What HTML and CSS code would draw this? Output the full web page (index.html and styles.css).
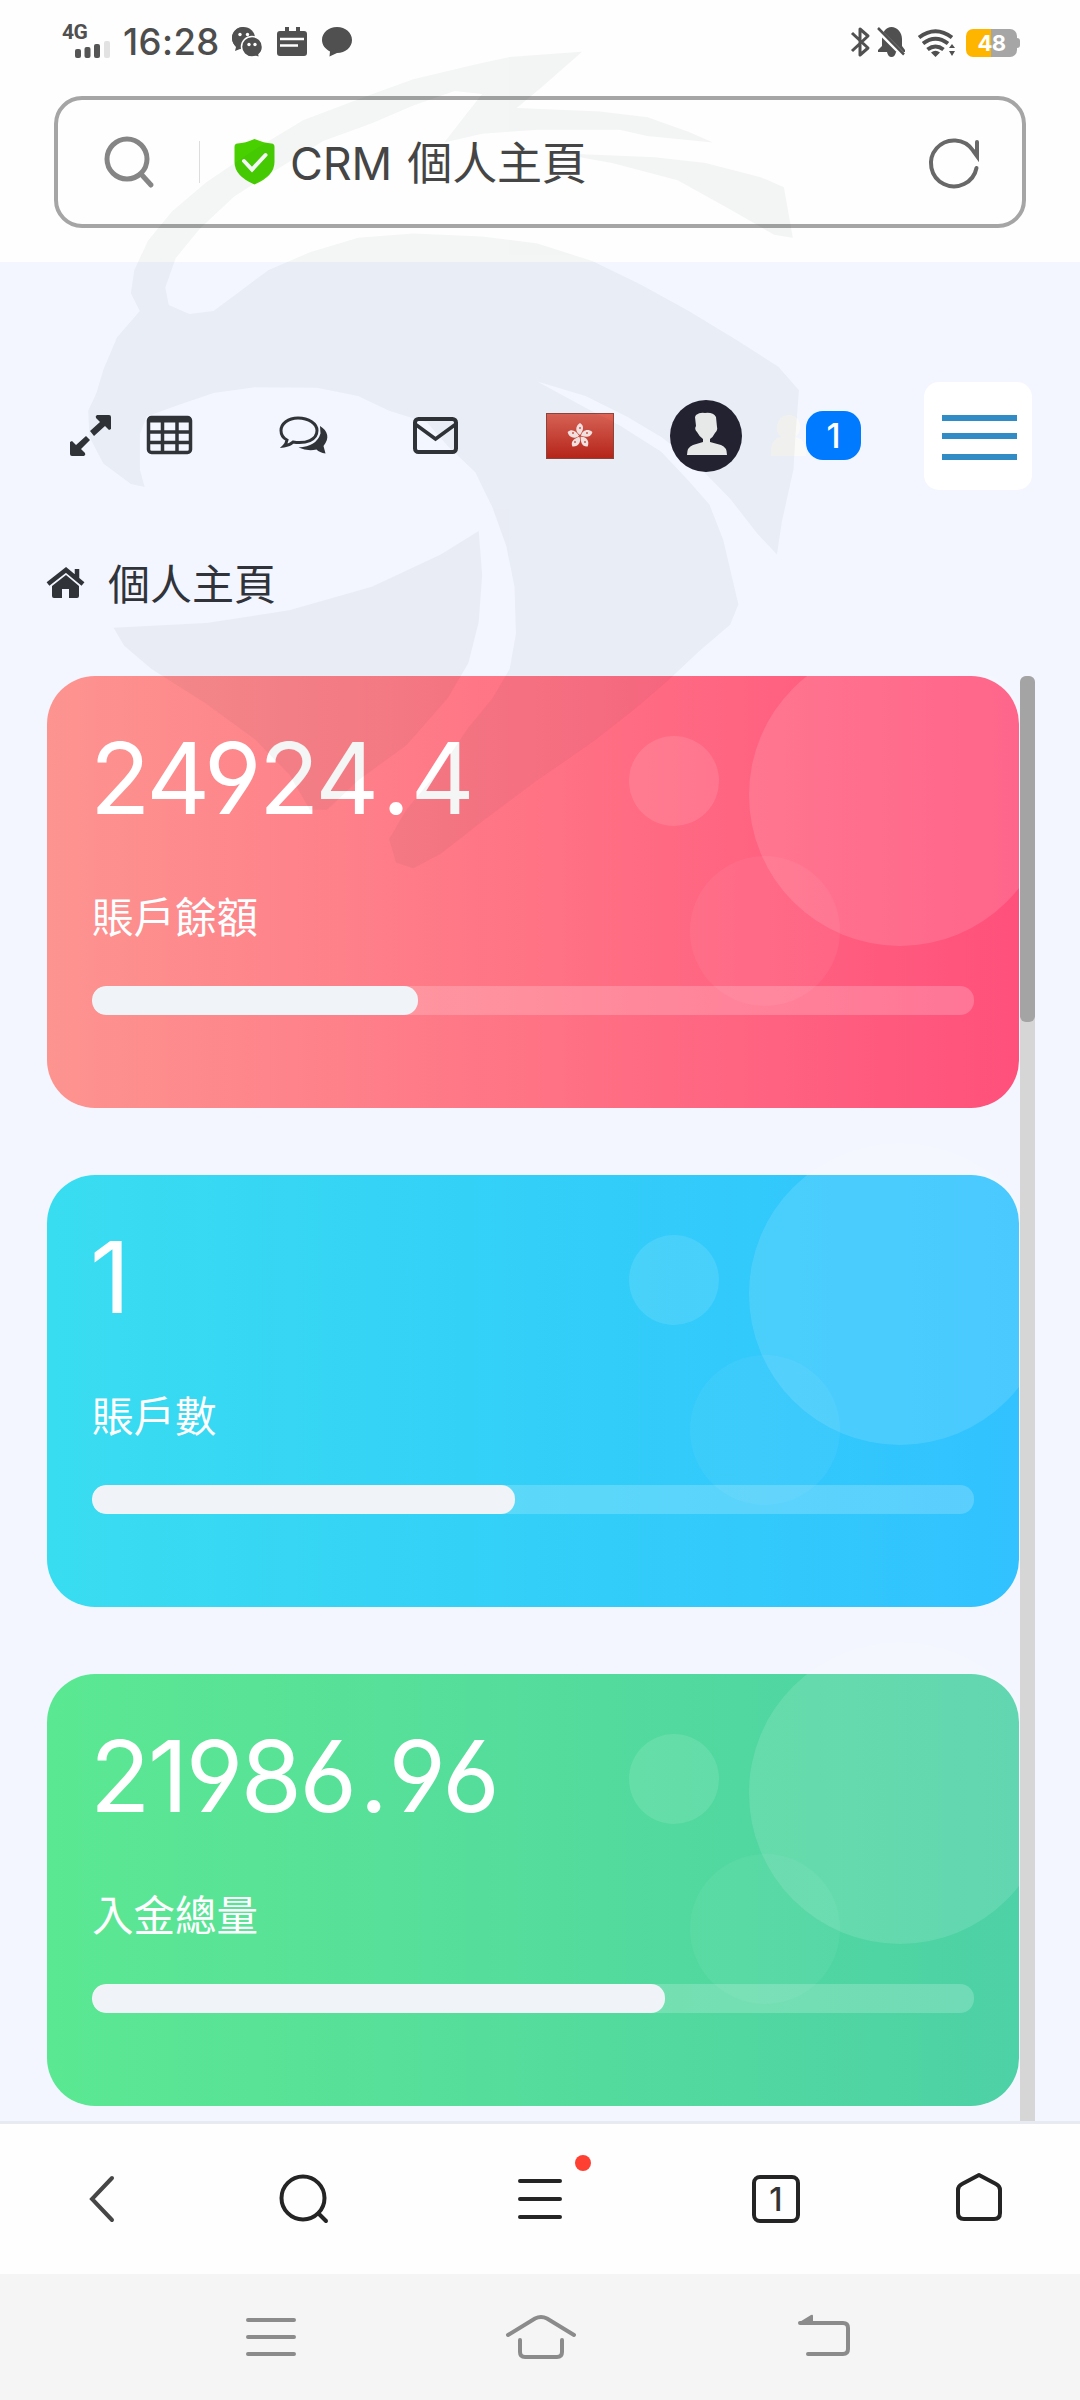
FILE: index.html
```html
<!DOCTYPE html>
<html lang="zh-Hant">
<head>
<meta charset="utf-8">
<title>CRM 個人主頁</title>
<link rel="stylesheet" href="styles.css">
</head>
<body>
<div class="screen">
  <header class="status">
    <div class="network">
      <span class="network-type">4G</span>
      <svg class="signal" width="36" height="18" viewBox="0 0 36 18"><g fill="#555"><rect x="0" y="8" width="6" height="9" rx="2"/><rect x="9.500" y="6" width="6" height="11" rx="2"/><rect x="19" y="3" width="6" height="14" rx="2"/></g><rect x="29" y="0" width="6" height="17" rx="2" fill="#e2e2e2"/></svg>
    </div>
    <time class="clock">16:28</time>
    <svg class="wechat" width="30" height="30" viewBox="0 0 30 30"><path d="M11.500 0C5 0 0 4.800 0 11c0 4 2 7 4 9l-1 4 5-2 4 .500V11z" fill="#505050"/><ellipse cx="11.500" cy="11" rx="11.500" ry="11" fill="#505050"/><path d="M20 9.500c-6 0-10.500 4.500-10.500 10.200S14 30 20 30l4-.500 3.500 1-.500-3c2.500-2 3.500-5 3.500-7.500C30.500 14 26 9.500 20 9.500z" fill="#505050" stroke="#fff" stroke-width="1.500"/><g fill="#fff"><circle cx="8" cy="7.500" r="1.700"/><circle cx="15.500" cy="7.500" r="1.700"/><circle cx="17" cy="17.500" r="1.700"/><circle cx="23" cy="17.500" r="1.700"/></g></svg>
    <svg class="agenda" width="30" height="30" viewBox="0 0 30 30"><path d="M3 4h5V0h4v4h7V0h4v4h4q3 0 3 3v19q0 3-3 3H3q-3 0-3-3V7q0-3 3-3z" fill="#505050"/><path d="M3 12h24M3 18.500h18" stroke="#fff" stroke-width="2.500"/></svg>
    <svg class="message" width="30" height="30" viewBox="0 0 30 30"><path d="M15 0c8.500 0 15 5.800 15 13s-6.500 13-15 13l-7.500 3.500L8 24.500C3.200 22 0 18 0 13 0 5.800 6.500 0 15 0z" fill="#505050"/></svg>
    <svg class="bluetooth" width="19" height="30" viewBox="0 0 19 30"><path d="M1 6l16 15-8 7V2l8 7L1 24" fill="none" stroke="#505050" stroke-width="3" stroke-linejoin="round"/></svg>
    <svg class="muted" width="28" height="31" viewBox="0 0 28 31"><path d="M4 12C4 5 8 0 13.500 0S24 5 24 12v7l3 4v2H18q-1 5-4.500 5T9 25H0v-2l4-4z" fill="#505050"/><path d="M-1 2l28 28" stroke="#fff" stroke-width="5"/><path d="M0 1l26 26.500" stroke="#505050" stroke-width="2.500"/></svg>
    <svg class="wifi" width="38" height="28" viewBox="0 0 38 28"><g fill="none" stroke="#505050" stroke-width="4"><path d="M1 8.500Q17.500-4 34 8.500M5 14.500Q17.500 5 30 14.500M9.500 20.500q8-6 16 0"/></g><path d="M17.500 28l-4.500-4.500q4.500-3.500 9 0zM31 19l3-4 3 4zM31 22l3 5 3-5z" fill="#505050"/></svg>
    <div class="battery"><span>48</span></div>
  </header>

  <div class="address">
    <svg class="find" width="50" height="52" viewBox="0 0 50 52"><g fill="none" stroke="#858585" stroke-width="5" stroke-linecap="round"><circle cx="23" cy="23" r="20"/><path d="M37 38l10 11"/></g></svg>
    <i class="divider"></i>
    <svg class="shield" width="41" height="46" viewBox="0 0 41 46"><path d="M20.500 0q10 4 17 4.500 3 0 3 3.500v15q0 14-20 22.500Q.500 37 .500 23V8q0-3.500 3-3.500 8-.500 17-4.500z" fill="#48d000"/><path d="M10 22l8 8.500 13.500-14.500" fill="none" stroke="#fff" stroke-width="4" stroke-linecap="round"/></svg>
    <span class="url">CRM 個人主頁</span>
    <svg class="reload" width="50" height="52" viewBox="0 0 50 52"><path d="M47.500 32A23 23 0 1 1 44 14.500L48 20V6" fill="none" stroke="#686868" stroke-width="4" stroke-linecap="round"/></svg>
  </div>

  <main class="page">
    <nav class="tools">
      <svg class="expand" width="43" height="43" viewBox="0 0 43 43"><g fill="#303338"><path d="M28 1h12q2 0 2 2v12l-2 1-4-4-11 10-4-5 10-9-4-4q-1-2 1-3zM15 42H3q-2 0-2-2V28l2-1 4 4 10-9 4 4-9 9 4 4q1 2-1 3z"/></g></svg>
      <svg class="table" width="46" height="39" viewBox="0 0 46 39"><rect x="1.500" y="1.500" width="42" height="35" rx="3" fill="none" stroke="#303338" stroke-width="3.500"/><path d="M1 4h43" stroke="#303338" stroke-width="5"/><path d="M1 16h43M1 26.500h43M15.500 4v33M30 4v33" stroke="#303338" stroke-width="3.500"/></svg>
      <svg class="chat" width="50" height="40" viewBox="0 0 50 40"><path d="M41 10c8 5 10 12 3.500 20l2 7.500q-6-1-9-4-9 2-18-2 18-1 22-14z" fill="#303338"/><path d="M19 2C9 2 2 8 2 14.500c0 4 2 7.500 6 9.500-.500 3-2 5-3 6 4-.500 7-2 9-4 13 2 24-2 24-11.500C38 8 30 2 19 2z" fill="none" stroke="#303338" stroke-width="3"/></svg>
      <svg class="mail" width="46" height="38" viewBox="0 0 46 38"><rect x="2" y="2" width="41" height="33" rx="3.500" fill="none" stroke="#303338" stroke-width="4"/><path d="M2 7l20.500 15L43 7" fill="none" stroke="#303338" stroke-width="3.500"/></svg>
      <svg class="flag" width="68" height="46" viewBox="0 0 68 46"><defs><linearGradient id="flag-red" x1="0" y1="0" x2="0" y2="1"><stop offset="0" stop-color="#df6558"/><stop offset="1" stop-color="#bd2418"/></linearGradient><path id="petal" d="M0-1C-5-4-5-10 0-13 5-10 3-5 0-1"/></defs><rect x=".5" y=".5" width="67" height="45" fill="url(#flag-red)" stroke="#94443b"/><g transform="translate(34 23)" fill="#fae9e7"><use href="#petal"/><use href="#petal" transform="rotate(72)"/><use href="#petal" transform="rotate(144)"/><use href="#petal" transform="rotate(216)"/><use href="#petal" transform="rotate(288)"/></g><g transform="translate(34 23)" fill="#d35b50"><circle cy="-8" r="1"/><circle cx="7" cy="-3" r="1"/><circle cx="5" cy="6" r="1"/><circle cx="-5" cy="6" r="1"/><circle cx="-7" cy="-3" r="1"/></g></svg>
      <svg class="avatar" width="72" height="72" viewBox="0 0 72 72"><circle cx="36" cy="36" r="36" fill="#232231"/><path d="M26 15q4-3 9-2 8-1 11 4l1 10q1 3-2 6-2 4-5 6v3l11 3q6 2 6 10H17q0-8 6-10l10-3v-3q-4-3-6-7-3-3-1-6l-1-9z" fill="#f1f1f1"/></svg>
      <div class="alerts">
        <svg width="35" height="42" viewBox="0 0 35 42"><path d="M18 0c14 0 14 20 5 22 8 1 12 5 12 19H0c0-12 2-18 11-19C3 19 4 0 18 0z" fill="#fafaf8"/></svg>
        <b class="count">1</b>
      </div>
      <div class="menu"><i></i><i></i><i></i></div>
    </nav>
    <div class="crumb">
      <svg width="38" height="31" viewBox="0 0 38 31"><path d="M1 16L19 2l17 14M30 12V1" fill="none" stroke="#303338" stroke-width="4.500"/><path d="M19 7L5 18v10q0 2 2 2h8V21h7v9h8q2 0 2-2V18z" fill="#303338"/></svg>
      <span>個人主頁</span>
    </div>
    <div class="scroller">
      <div class="cards">
        <section class="card pink">
          <svg class="bubbles" width="972" height="470" viewBox="0 -38 972 470"><g fill="#fff"><circle cx="853" cy="119" r="151" opacity=".12"/><circle cx="627" cy="105" r="45" opacity=".11"/><circle cx="718" cy="255" r="75" opacity=".05"/></g></svg>
          <div class="value">24924<span class="point">.</span>4</div><div class="label">賬戶餘額</div>
          <div class="bar"><div class="fill" style="width:37%"></div></div>
        </section>
        <section class="card blue">
          <svg class="bubbles" width="972" height="470" viewBox="0 -38 972 470"><g fill="#fff"><circle cx="853" cy="119" r="151" opacity=".12"/><circle cx="627" cy="105" r="45" opacity=".11"/><circle cx="718" cy="255" r="75" opacity=".05"/></g></svg>
          <div class="value">1</div><div class="label">賬戶數</div>
          <div class="bar"><div class="fill" style="width:48%"></div></div>
        </section>
        <section class="card green">
          <svg class="bubbles" width="972" height="470" viewBox="0 -38 972 470"><g fill="#fff"><circle cx="853" cy="119" r="151" opacity=".12"/><circle cx="627" cy="105" r="45" opacity=".11"/><circle cx="718" cy="255" r="75" opacity=".05"/></g></svg>
          <div class="value">21986<span class="point">.</span>96</div><div class="label">入金總量</div>
          <div class="bar"><div class="fill" style="width:65%"></div></div>
        </section>
      </div>
      <div class="track"><div class="thumb"></div></div>
    </div>
  </main>

  <nav class="browser-nav">
    <svg class="nav-back" width="26" height="46" viewBox="0 0 26 46"><path d="M23 2L3 23l20 21" fill="none" stroke="#464646" stroke-width="4" stroke-linecap="round"/></svg>
    <svg class="nav-find" width="50" height="50" viewBox="0 0 50 50"><g fill="none" stroke="#242424" stroke-width="4" stroke-linecap="round"><circle cx="24" cy="24" r="21.500"/><path d="M40 40l7 7"/></g></svg>
    <div class="nav-menu"><svg width="44" height="42" viewBox="0 0 44 42"><path d="M2 3h40M2 21h40M2 39h40" stroke="#242424" stroke-width="4" stroke-linecap="round"/></svg><i class="dot"></i></div>
    <div class="tabs">1</div>
    <svg class="nav-home" width="48" height="50" viewBox="0 0 48 50"><path d="M24 3l17 9q4 2 4 6v23q0 6-6 6H9q-6 0-6-6V18q0-4 4-6z" fill="none" stroke="#242424" stroke-width="4" stroke-linejoin="round"/></svg>
  </nav>
  <footer class="system-nav">
    <svg class="recents" width="50" height="40" viewBox="0 0 50 40"><path d="M2 3h46M2 20h46M2 37h46" stroke="#8b8b8b" stroke-width="4" stroke-linecap="round"/></svg>
    <svg class="launcher" width="72" height="46" viewBox="0 0 72 46"><path d="M3 21L30 4.500q6-3 12 0L69 21M15 26v12q0 5 5 5h32q5 0 5-5V26" fill="none" stroke="#8b8b8b" stroke-width="4" stroke-linecap="round"/></svg>
    <svg class="return" width="52" height="44" viewBox="0 0 52 44"><path d="M2 10h43q5 0 5 5v21q0 5-5 5H10" fill="none" stroke="#8b8b8b" stroke-width="4" stroke-linecap="round"/><path d="M0 10L13 2q2-1 2 1v7z" fill="#8b8b8b"/></svg>
  </footer>

  <svg class="watermark" width="1080" height="920" viewBox="0 0 1568 1568" preserveAspectRatio="none"><g fill="#222a30" opacity=".043">
    <path d="M845 88L740 97 690 110 600 135 530 165 440 205 370 255 300 310 250 360 215 410 195 460 190 500 203 530 170 575 150 630 140 670 128 700 130 745 150 790 190 825 210 830 203 800 203 740 213 710 260 690 310 670 370 660 460 661 520 675 565 700 620 720 650 760 690 805 715 865 735 930 747 1000 749 1080 740 1140 715 1190 680 1240 640 1310 590 1380 565 1430 575 1470 600 1480 640 1455 700 1400 780 1330 860 1265 920 1210 970 1160 1015 1110 1060 1065 1072 1030 1060 970 1050 920 1030 860 1000 820 960 770 900 725 850 695 780 650 850 675 910 710 960 745 1010 790 1060 850 1100 910 1128 945 1135 890 1152 800 1155 740 1160 665 1130 625 1070 580 1000 530 930 485 860 445 780 415 700 403 600 398 520 405 450 430 390 460 350 495 310 530 275 535 245 520 240 490 255 440 290 390 340 335 400 290 470 240 540 210 600 180 660 155 700 160 670 205 645 243 700 228 780 221 900 221 940 232 1035 243 1000 225 940 200 870 190 750 184 790 145Z"/>
    <path d="M810 261L950 268 1024 278 1104 302 1138 319 1151 405 1124 400 1054 353 984 307 889 278Z"/>
    <path d="M695 905L640 945 540 1000 420 1040 300 1062 165 1070 180 1100 220 1140 300 1200 370 1260 420 1320 450 1380 475 1380 520 1330 590 1270 650 1190 680 1130 695 1060 700 980Z"/>
  </g></svg>
</div>
</body>
</html>
```
FILE: styles.css
```css
* { box-sizing: border-box; }
body { margin: 0; background: #fefefe; font-family: "Noto Sans CJK TC", sans-serif; }
svg { display: block; flex: none; overflow: visible; }
.screen { position: relative; width: 1080px; height: 2400px; overflow: hidden; display: flex; flex-direction: column; }

.status { height: 96px; flex: none; padding: 27px 0 0 62px; display: flex; align-items: flex-start; }
.network { width: 61px; height: 30px; display: flex; flex-direction: column; margin-top: -3px; }
.network-type { height: 17px; font: bold 21px/17px Roboto, sans-serif; letter-spacing: -0.5px; color: #505050; }
.signal { margin-left: 13px; }
.clock { width: 109px; font: 450 36.500px/30px Inter, sans-serif; letter-spacing: 0.4px; color: #4d4d4d; white-space: nowrap; }
.agenda, .message { margin-left: 15px; }
.bluetooth { margin-left: 499px; }
.muted { margin-left: 8px; }
.wifi { margin: 2px 0 0 12px; }
.battery { position: relative; margin: 2px 0 0 10px; width: 51px; height: 28px; border-radius: 7px; background: linear-gradient(90deg, #feb500 50%, #a6a6a6 50%); color: #fff; font: bold 22px/29px Inter, sans-serif; text-align: center; letter-spacing: -0.5px; }
.battery::after { content: ""; position: absolute; right: -3px; top: 9px; width: 3px; height: 10px; border-radius: 0 3px 3px 0; background: #a6a6a6; }

.address { height: 132px; margin: 0 54px 34px; border: 4px solid #a5a5a5; border-radius: 28px; padding-left: 46px; display: flex; align-items: center; flex: none; }
.divider { width: 1px; height: 42px; margin: 0 34px 0 45px; background: #ddd; }
.url { flex: 1; margin: 4px 0 0 15px; font: 400 45px/60px Inter, "Noto Sans CJK TC", sans-serif; letter-spacing: -0.2px; word-spacing: 3px; color: #454545; white-space: nowrap; }
.reload { margin-right: 43px; }

.page { height: 1862px; flex: none; padding: 119px 0 0 47px; background: #f3f6fe; border-bottom: 3px solid #e7eaf0; overflow: hidden; }
.tools { height: 109px; display: flex; align-items: center; }
.expand { margin-left: 22px; }
.table { margin-left: 35px; }
.chat { margin-left: 86px; }
.mail { margin-left: 84px; }
.flag { margin-left: 87px; }
.avatar { margin-left: 56px; }
.alerts { display: flex; align-items: center; margin-left: 29px; }
.count { width: 55px; height: 49px; border-radius: 17px; background: #007aff; color: #fff; font: 500 34px/49px Inter, sans-serif; text-align: center; }
.menu { width: 108px; height: 108px; margin-left: 63px; padding: 33px 15px 0 18px; border-radius: 15px; background: #fff; }
.menu i { display: block; height: 6px; background: #318cc5; margin-bottom: 12px; }
.menu i:nth-child(2) { margin-bottom: 15px; }
.crumb { height: 186px; display: flex; align-items: center; gap: 23px; font: 400 42px/60px "Noto Sans CJK TC", sans-serif; color: #30333a; }
.crumb span { margin-top: -2px; }
.scroller { display: flex; height: 1450px; gap: 1px; overflow: hidden; }
.cards { width: 972px; display: flex; flex-direction: column; gap: 67px; }
.card { position: relative; height: 432px; flex: none; border-radius: 48px; padding: 45px 45px 0; color: #fff; }
.pink { background: linear-gradient(90deg, #fd9490, #ff7385 50%, #ff507b); }
.blue { background: linear-gradient(90deg, #39ddf0, #33cff8 50%, #31c2ff); }
.green { background: linear-gradient(90deg, #5be892, #4dd1a6); }
.bubbles { position: absolute; left: 0; top: -38px; overflow: hidden; }
.value { position: relative; height: 120px; margin-left: -2px; font: 400 99px/115px Inter, sans-serif; font-feature-settings: "cv03", "cv04"; letter-spacing: -2.500px; white-space: nowrap; }
.point { margin: 0 3px 0 5px; }
.label { position: relative; height: 145px; font: 400 41.500px/149px "Noto Sans CJK TC", sans-serif; }
.bar { position: relative; height: 29px; border-radius: 14px; background: rgba(255,255,255,.2); overflow: hidden; }
.fill { height: 100%; border-radius: 14px; background: #f0f4f8; }
.track { width: 15px; background: #d6d6d6; border-radius: 7px 7px 0 0; }
.thumb { height: 346px; border-radius: 6px; background: #a4a4a4; }

.browser-nav { height: 150px; flex: none; display: flex; align-items: center; background: #fefefe; }
.nav-back { margin-left: 89px; }
.nav-find { margin-left: 164px; }
.nav-menu { position: relative; margin-left: 189px; }
.dot { position: absolute; left: 57px; top: -23px; width: 16px; height: 16px; border-radius: 50%; background: #fe4033; }
.tabs { width: 48px; height: 48px; margin-left: 190px; border: 4px solid #242424; border-radius: 8px; font: 500 32px/41px Inter, sans-serif; text-align: center; color: #333; }
.nav-home { margin-left: 155px; margin-top: -4px; }
.system-nav { height: 126px; flex: none; display: flex; align-items: center; background: #f5f5f5; }
.recents { margin-left: 246px; }
.launcher { margin-left: 209px; }
.return { margin-left: 221px; margin-top: -4px; }
.watermark { position: absolute; left: 0; top: 0; pointer-events: none; }
```
